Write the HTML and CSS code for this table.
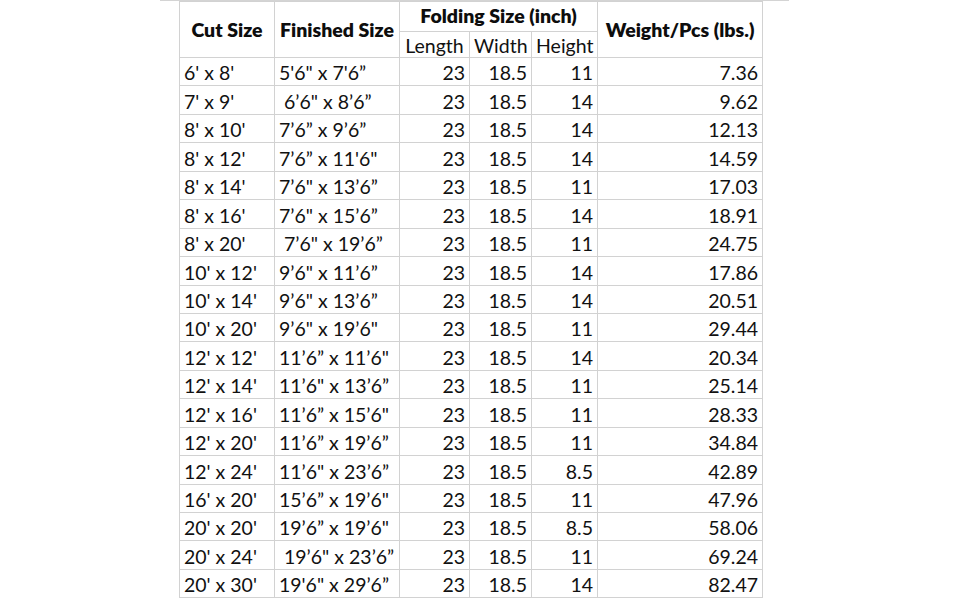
FILE: index.html
```html
<!DOCTYPE html>
<html>
<head>
<meta charset="utf-8">
<link rel="stylesheet" href="styles.css">
</head>
<body>
<div class="frame">
<table class="sheet">
  <colgroup>
    <col class="c-cut"><col class="c-fin"><col class="c-len"><col class="c-wid"><col class="c-hei"><col class="c-wt">
  </colgroup>
  <thead>
    <tr class="h1">
      <th rowspan="2" class="hd">Cut Size</th>
      <th rowspan="2" class="hd">Finished Size</th>
      <th colspan="3" class="hd">Folding Size (inch)</th>
      <th rowspan="2" class="hd">Weight/Pcs (lbs.)</th>
    </tr>
    <tr class="h2">
      <th class="sub">Length</th>
      <th class="sub">Width</th>
      <th class="sub">Height</th>
    </tr>
  </thead>
  <tbody>
    <tr><td>6' x 8'</td><td>5'6" x 7'6”</td><td class="n">23</td><td class="n">18.5</td><td class="n">11</td><td class="n">7.36</td></tr>
    <tr><td>7' x 9'</td><td class="ind">6’6" x 8’6”</td><td class="n">23</td><td class="n">18.5</td><td class="n">14</td><td class="n">9.62</td></tr>
    <tr><td>8' x 10'</td><td>7’6” x 9’6”</td><td class="n">23</td><td class="n">18.5</td><td class="n">14</td><td class="n">12.13</td></tr>
    <tr><td>8' x 12'</td><td>7’6” x 11'6"</td><td class="n">23</td><td class="n">18.5</td><td class="n">14</td><td class="n">14.59</td></tr>
    <tr><td>8' x 14'</td><td>7’6" x 13’6”</td><td class="n">23</td><td class="n">18.5</td><td class="n">11</td><td class="n">17.03</td></tr>
    <tr><td>8' x 16'</td><td>7’6" x 15’6”</td><td class="n">23</td><td class="n">18.5</td><td class="n">14</td><td class="n">18.91</td></tr>
    <tr><td>8' x 20'</td><td class="ind">7’6" x 19’6”</td><td class="n">23</td><td class="n">18.5</td><td class="n">11</td><td class="n">24.75</td></tr>
    <tr><td>10' x 12'</td><td>9’6" x 11’6”</td><td class="n">23</td><td class="n">18.5</td><td class="n">14</td><td class="n">17.86</td></tr>
    <tr><td>10' x 14'</td><td>9’6" x 13’6”</td><td class="n">23</td><td class="n">18.5</td><td class="n">14</td><td class="n">20.51</td></tr>
    <tr><td>10' x 20'</td><td>9’6" x 19’6"</td><td class="n">23</td><td class="n">18.5</td><td class="n">11</td><td class="n">29.44</td></tr>
    <tr><td>12' x 12'</td><td>11’6” x 11’6"</td><td class="n">23</td><td class="n">18.5</td><td class="n">14</td><td class="n">20.34</td></tr>
    <tr><td>12' x 14'</td><td>11’6" x 13’6”</td><td class="n">23</td><td class="n">18.5</td><td class="n">11</td><td class="n">25.14</td></tr>
    <tr><td>12' x 16'</td><td>11’6” x 15’6"</td><td class="n">23</td><td class="n">18.5</td><td class="n">11</td><td class="n">28.33</td></tr>
    <tr><td>12' x 20'</td><td>11’6” x 19’6”</td><td class="n">23</td><td class="n">18.5</td><td class="n">11</td><td class="n">34.84</td></tr>
    <tr><td>12' x 24'</td><td>11’6" x 23’6”</td><td class="n">23</td><td class="n">18.5</td><td class="n">8.5</td><td class="n">42.89</td></tr>
    <tr><td>16' x 20'</td><td>15’6” x 19’6"</td><td class="n">23</td><td class="n">18.5</td><td class="n">11</td><td class="n">47.96</td></tr>
    <tr><td>20' x 20'</td><td>19’6” x 19’6"</td><td class="n">23</td><td class="n">18.5</td><td class="n">8.5</td><td class="n">58.06</td></tr>
    <tr><td>20' x 24'</td><td class="ind">19’6" x 23’6”</td><td class="n">23</td><td class="n">18.5</td><td class="n">11</td><td class="n">69.24</td></tr>
    <tr><td>20' x 30'</td><td>19'6" x 29’6”</td><td class="n">23</td><td class="n">18.5</td><td class="n">14</td><td class="n">82.47</td></tr>
  </tbody>
</table>
</div>
</body>
</html>
```

FILE: styles.css
```css
html, body {
  margin: 0;
  padding: 0;
  background: #ffffff;
}

body {
  font-family: Lato, "Open Sans", "Liberation Sans", sans-serif;
  color: #111111;
  overflow: hidden;
}

.frame {
  margin-left: 160px;
  width: 610px;
  border-top: 1px solid #d4d4d4;
  padding-left: 19px;
  padding-top: 0;
}

.sheet {
  border-collapse: collapse;
  table-layout: fixed;
  width: 583px;
}

.c-cut { width: 95px; }
.c-fin { width: 125px; }
.c-len { width: 70px; }
.c-wid { width: 62px; }
.c-hei { width: 66px; }
.c-wt  { width: 165px; }

.sheet th,
.sheet td {
  border: 1.5px solid #d2d2d2;
  padding: 0 4px;
  font-size: 19.5px;
  line-height: 22px;
  white-space: nowrap;
  overflow: hidden;
}

.h1 th { height: 27px; }
.h2 th { height: 25px; }

.hd {
  font-weight: 800;
  text-align: center;
  vertical-align: middle;
  color: #0d0d0d;
}

.h1 .hd[colspan] {
  vertical-align: middle;
  padding-bottom: 2px;
}

.sub {
  font-weight: 400;
  text-align: center;
  vertical-align: bottom;
  padding-bottom: 1px;
}

.sheet td {
  height: 26.45px;
  vertical-align: bottom;
  padding-bottom: 1px;
  text-align: left;
}

.sheet td.n {
  text-align: right;
}

.sheet td.ind {
  padding-left: 9px;
}
```
